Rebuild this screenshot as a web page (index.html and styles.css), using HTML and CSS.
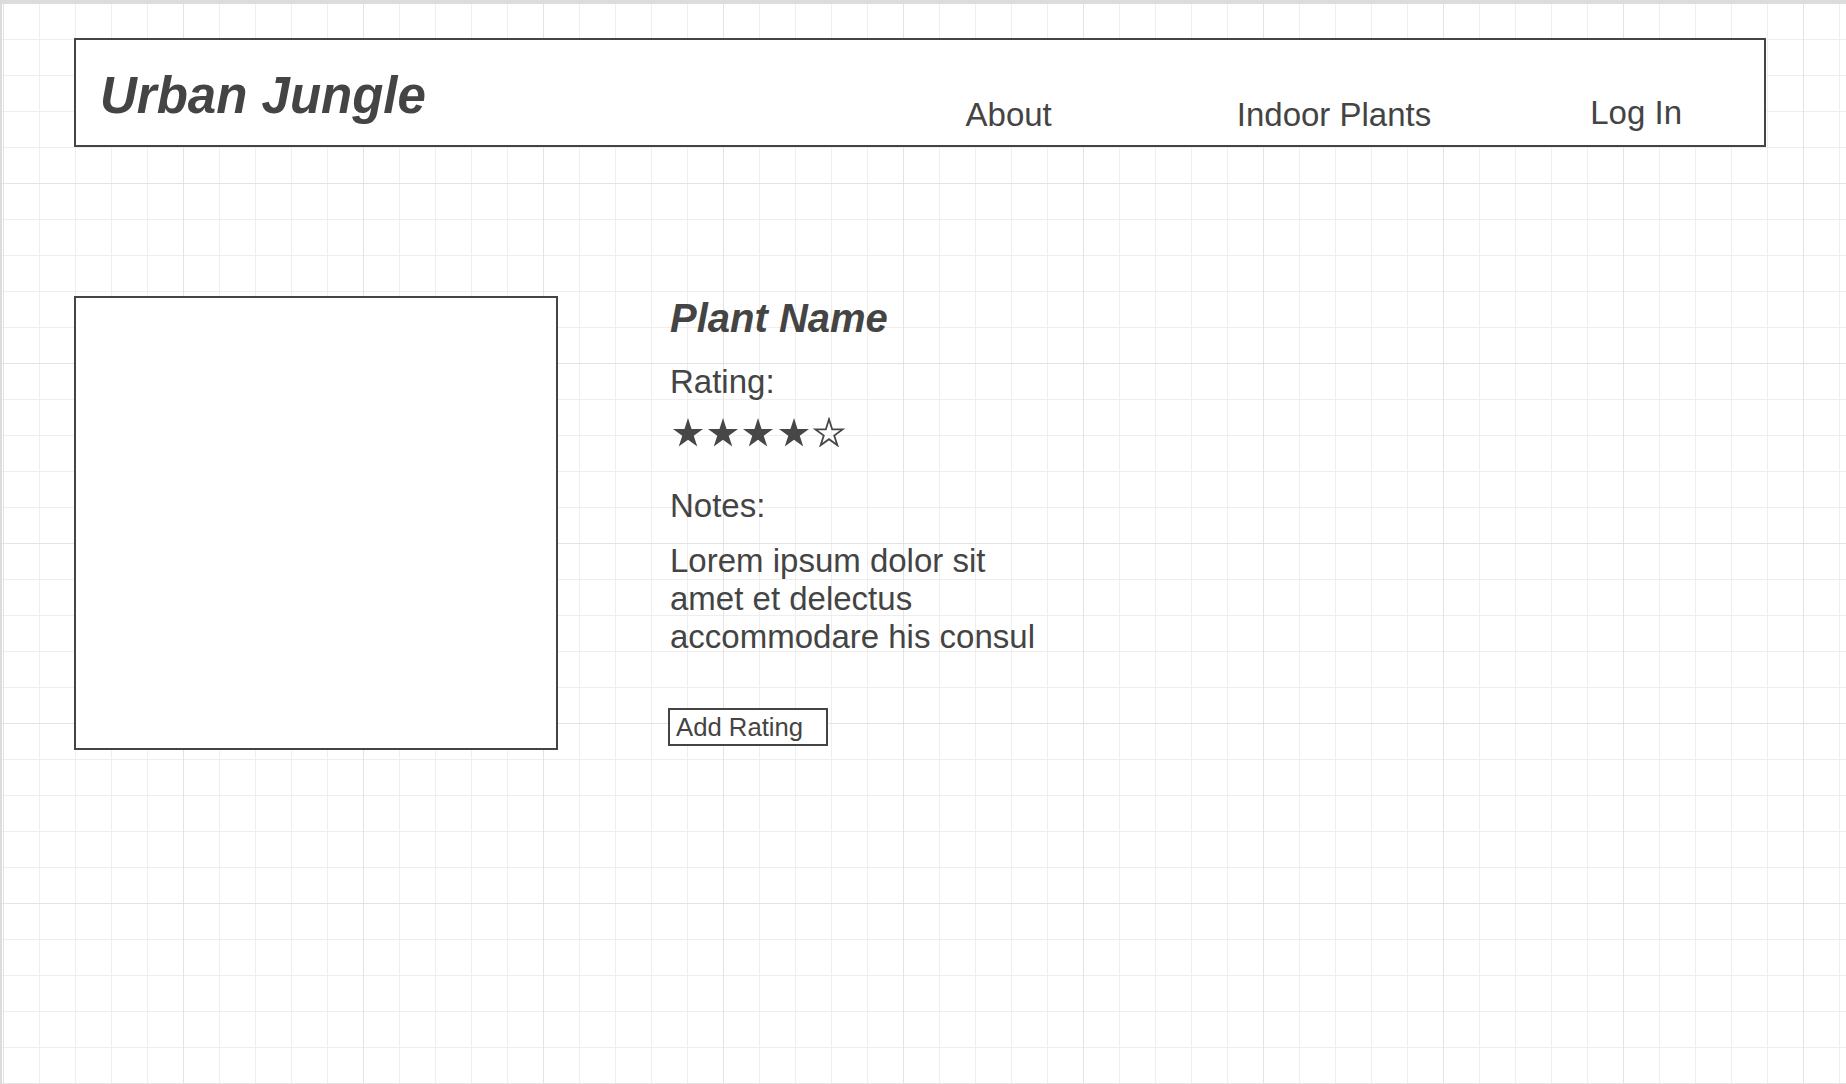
FILE: index.html
```html
<!DOCTYPE html>
<html lang="en">
<head>
<meta charset="utf-8">
<title>Urban Jungle – Plant</title>
<link rel="stylesheet" href="styles.css">
</head>
<body class="page">
  <header class="topbar">
    <h1 class="brand">Urban Jungle</h1>
    <nav class="nav">
      <a class="nav-link nav-link--about" href="#">About</a>
      <a class="nav-link nav-link--plants" href="#">Indoor Plants</a>
      <a class="nav-link nav-link--login" href="#">Log In</a>
    </nav>
  </header>

  <main class="detail">
    <div class="photo"></div>
    <section class="info">
      <h2 class="plant-name">Plant Name</h2>
      <div class="label label--rating">Rating:</div>
      <div class="stars">
        <svg class="star" viewBox="-1 -1 32 30" width="32" height="30"><polygon class="star-fill" points="15,0 18.54,10.89 30,10.9 20.74,17.63 24.27,28.53 15,21.8 5.73,28.53 9.26,17.63 0,10.9 11.46,10.89"/></svg>
        <svg class="star" viewBox="-1 -1 32 30" width="32" height="30"><polygon class="star-fill" points="15,0 18.54,10.89 30,10.9 20.74,17.63 24.27,28.53 15,21.8 5.73,28.53 9.26,17.63 0,10.9 11.46,10.89"/></svg>
        <svg class="star" viewBox="-1 -1 32 30" width="32" height="30"><polygon class="star-fill" points="15,0 18.54,10.89 30,10.9 20.74,17.63 24.27,28.53 15,21.8 5.73,28.53 9.26,17.63 0,10.9 11.46,10.89"/></svg>
        <svg class="star" viewBox="-1 -1 32 30" width="32" height="30"><polygon class="star-fill" points="15,0 18.54,10.89 30,10.9 20.74,17.63 24.27,28.53 15,21.8 5.73,28.53 9.26,17.63 0,10.9 11.46,10.89"/></svg>
        <svg class="star" viewBox="-1 -1 32 30" width="32" height="30"><polygon class="star-empty" points="15,1.2 18.2,11.4 28.6,11.4 20.2,17.5 23.4,27.3 15,21.2 6.6,27.3 9.8,17.5 1.4,11.4 11.8,11.4"/></svg>
      </div>
      <div class="label label--notes">Notes:</div>
      <p class="notes">Lorem ipsum dolor sit amet et delectus accommodare his consul</p>
      <button class="add-rating" type="button">Add Rating</button>
    </section>
  </main>
</body>
</html>
```

FILE: styles.css
```css
html {
  margin: 0;
  padding: 0;
}

.page {
  margin: 0;
  min-height: 1084px;
  box-sizing: border-box;
  padding: 34px 0 0 72px;
  border-top: 4px solid #dcdcdc;
  border-left: 2px solid #dcdcdc;
  background-color: #ffffff;
  background-image:
    linear-gradient(to right, #e3e3e3 1px, transparent 1px),
    linear-gradient(to bottom, #e3e3e3 1px, transparent 1px),
    linear-gradient(to right, #eeeeee 1px, transparent 1px),
    linear-gradient(to bottom, #eeeeee 1px, transparent 1px);
  background-size: 180px 180px, 180px 180px, 36px 36px, 36px 36px;
  background-position: 3px 3px, 3px 3px, 3px 3px, 3px 3px;
  background-origin: border-box;
  font-family: "Liberation Sans", Arial, Helvetica, sans-serif;
  color: #444444;
  overflow: hidden;
}

/* ---------- header ---------- */
.topbar {
  display: flex;
  align-items: flex-start;
  width: 1692px;
  height: 109px;
  box-sizing: border-box;
  border: 2px solid #444444;
  background: #ffffff;
}

.brand {
  margin: 29.8px 0 0 0;
  padding-left: 24px;
  font-size: 51px;
  line-height: 51px;
  font-weight: bold;
  font-style: italic;
  color: #444444;
}

.nav {
  display: flex;
  align-items: flex-start;
  margin-left: auto;
  margin-top: 58px;
  padding-right: 82px;
}

.nav-link {
  font-size: 33px;
  line-height: 33px;
  color: #444444;
  text-decoration: none;
}

.nav-link--about {
  margin-right: 185px;
}

.nav-link--plants {
  margin-right: 159px;
}

.nav-link--login {
  margin-top: -2px;
}

/* ---------- main ---------- */
.detail {
  display: flex;
  align-items: flex-start;
  margin-top: 149px;
}

.photo {
  width: 484px;
  height: 454px;
  box-sizing: border-box;
  border: 2px solid #444444;
  background: #ffffff;
  flex: none;
}

.info {
  display: flex;
  flex-direction: column;
  align-items: flex-start;
  margin-left: 112px;
  padding-top: 2px;
}

.plant-name {
  margin: 0;
  font-size: 40px;
  line-height: 40px;
  font-weight: bold;
  font-style: italic;
  color: #444444;
}

.label {
  font-size: 33px;
  line-height: 33px;
}

.label--rating {
  margin-top: 26.7px;
}

.stars {
  display: flex;
  gap: 3.2px;
  margin: 19.2px 0 0 2px;
  height: 30px;
}

.star {
  display: block;
}

.star-fill {
  fill: #474747;
}

.star-empty {
  fill: none;
  stroke: #474747;
  stroke-width: 1.8;
  stroke-linejoin: miter;
}

.label--notes {
  margin-top: 42px;
}

.notes {
  margin: 20.5px 0 0 0;
  width: 380px;
  font-size: 33px;
  line-height: 38px;
}

.add-rating {
  margin: 51.5px 0 0 -2px;
  width: 160px;
  height: 38px;
  box-sizing: border-box;
  padding: 2px 0 0 6px;
  border: 2px solid #444444;
  border-radius: 0;
  background: #ffffff;
  font-family: "Liberation Sans", Arial, Helvetica, sans-serif;
  font-size: 25.7px;
  line-height: 25.7px;
  color: #444444;
  text-align: left;
}
```
